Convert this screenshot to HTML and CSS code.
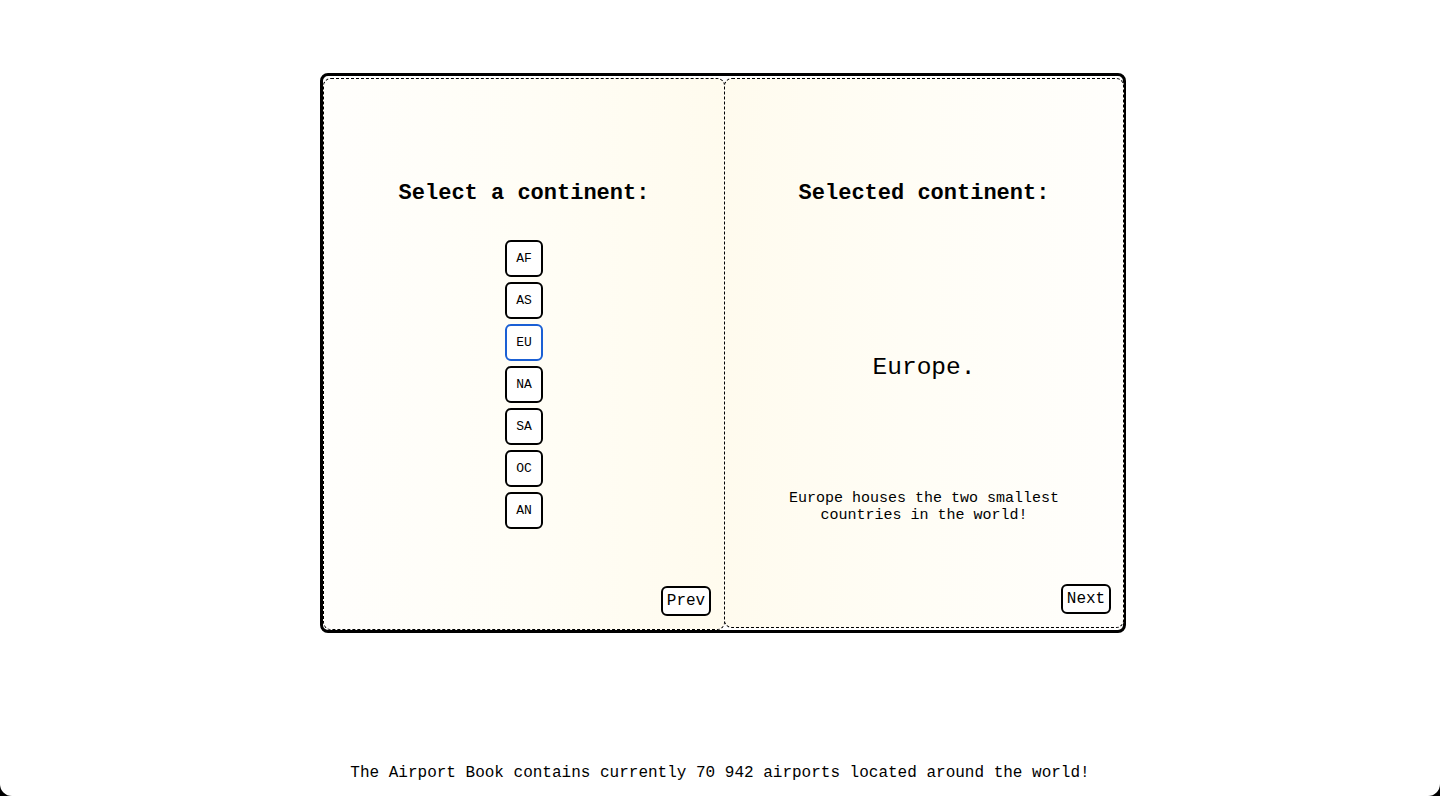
FILE: index.html
```html
<!DOCTYPE html>
<html lang="en">
<head>
<meta charset="utf-8">
<title>The Airport Book</title>
<link rel="stylesheet" href="styles.css">
</head>
<body>
<div class="screen">
  <main class="stage">
    <div class="book">
      <section class="page page-left">
        <h2 class="page-title">Select a continent:</h2>
        <div class="continents">
          <button class="cont">AF</button>
          <button class="cont">AS</button>
          <button class="cont cont-active">EU</button>
          <button class="cont">NA</button>
          <button class="cont">SA</button>
          <button class="cont">OC</button>
          <button class="cont">AN</button>
        </div>
        <button class="nav-btn">Prev</button>
      </section>
      <section class="page page-right">
        <h2 class="page-title">Selected continent:</h2>
        <p class="selected-name">Europe.</p>
        <p class="fact">Europe houses the two smallest<br>countries in the world!</p>
        <button class="nav-btn nav-next">Next</button>
      </section>
    </div>
  </main>
  <footer class="footer">The Airport Book contains currently 70 942 airports located around the world!</footer>
</div>
</body>
</html>
```

FILE: styles.css
```css
html {
  background: #000;
}
body {
  margin: 0;
  background: #000;
  font-family: "Liberation Mono", "Courier New", monospace;
  color: #000;
}
.screen {
  width: 1440px;
  height: 796px;
  background: #fff;
  border-radius: 0 0 12px 12px;
  display: flex;
  flex-direction: column;
  align-items: center;
  overflow: hidden;
}
.stage {
  padding-top: 73px;
  display: flex;
  justify-content: center;
  width: 100%;
}
.book {
  width: 800px;
  height: 552px;
  border: 3px solid #000;
  border-radius: 8px;
  display: flex;
  padding-top: 2px;
  box-sizing: content-box;
  margin-left: 6px;
}
.page {
  height: 550px;
  border: 1px dashed #000;
  border-radius: 8px;
  display: flex;
  flex-direction: column;
  align-items: center;
  box-sizing: border-box;
  flex-shrink: 0;
}
.page-left {
  width: 402px;
  background: linear-gradient(to right, #fffefc 0%, #fffdf5 55%, #fffbee 100%);
  height: 552px;
  margin-bottom: -2px;
}
.page-right {
  width: 400px;
  background: linear-gradient(to right, #fffbee 0%, #fffdf5 45%, #fffefc 100%);
  margin-left: -1px;
}
.page-title {
  margin: 102px 0 0;
  font-size: 22px;
  font-weight: bold;
  line-height: 26px;
}
.continents {
  margin-top: 33px;
  display: flex;
  flex-direction: column;
  gap: 5px;
  align-items: center;
}
.cont {
  width: 38px;
  height: 37px;
  border: 2px solid #000;
  border-radius: 6px;
  background: #fff;
  font-family: "Liberation Mono", "Courier New", monospace;
  font-size: 13px;
  padding: 0;
  color: #000;
}
.cont-active {
  border-color: #1a5fd4;
}
.nav-btn {
  margin-top: auto;
  align-self: flex-end;
  margin-right: 13px;
  margin-bottom: 13px;
  width: 50px;
  height: 30px;
  border: 2px solid #000;
  border-radius: 6px;
  background: #fff;
  font-family: "Liberation Mono", "Courier New", monospace;
  font-size: 16px;
  padding: 0;
  color: #000;
}
.nav-next {
  margin-right: 12px;
}
.selected-name {
  margin: 147px 0 0;
  font-size: 24.5px;
  line-height: 28px;
}
.fact {
  margin: 108px 0 0;
  font-size: 15px;
  line-height: 17px;
  text-align: center;
}
.footer {
  margin-top: auto;
  margin-bottom: 14px;
  font-size: 16px;
  line-height: 18px;
}
```
